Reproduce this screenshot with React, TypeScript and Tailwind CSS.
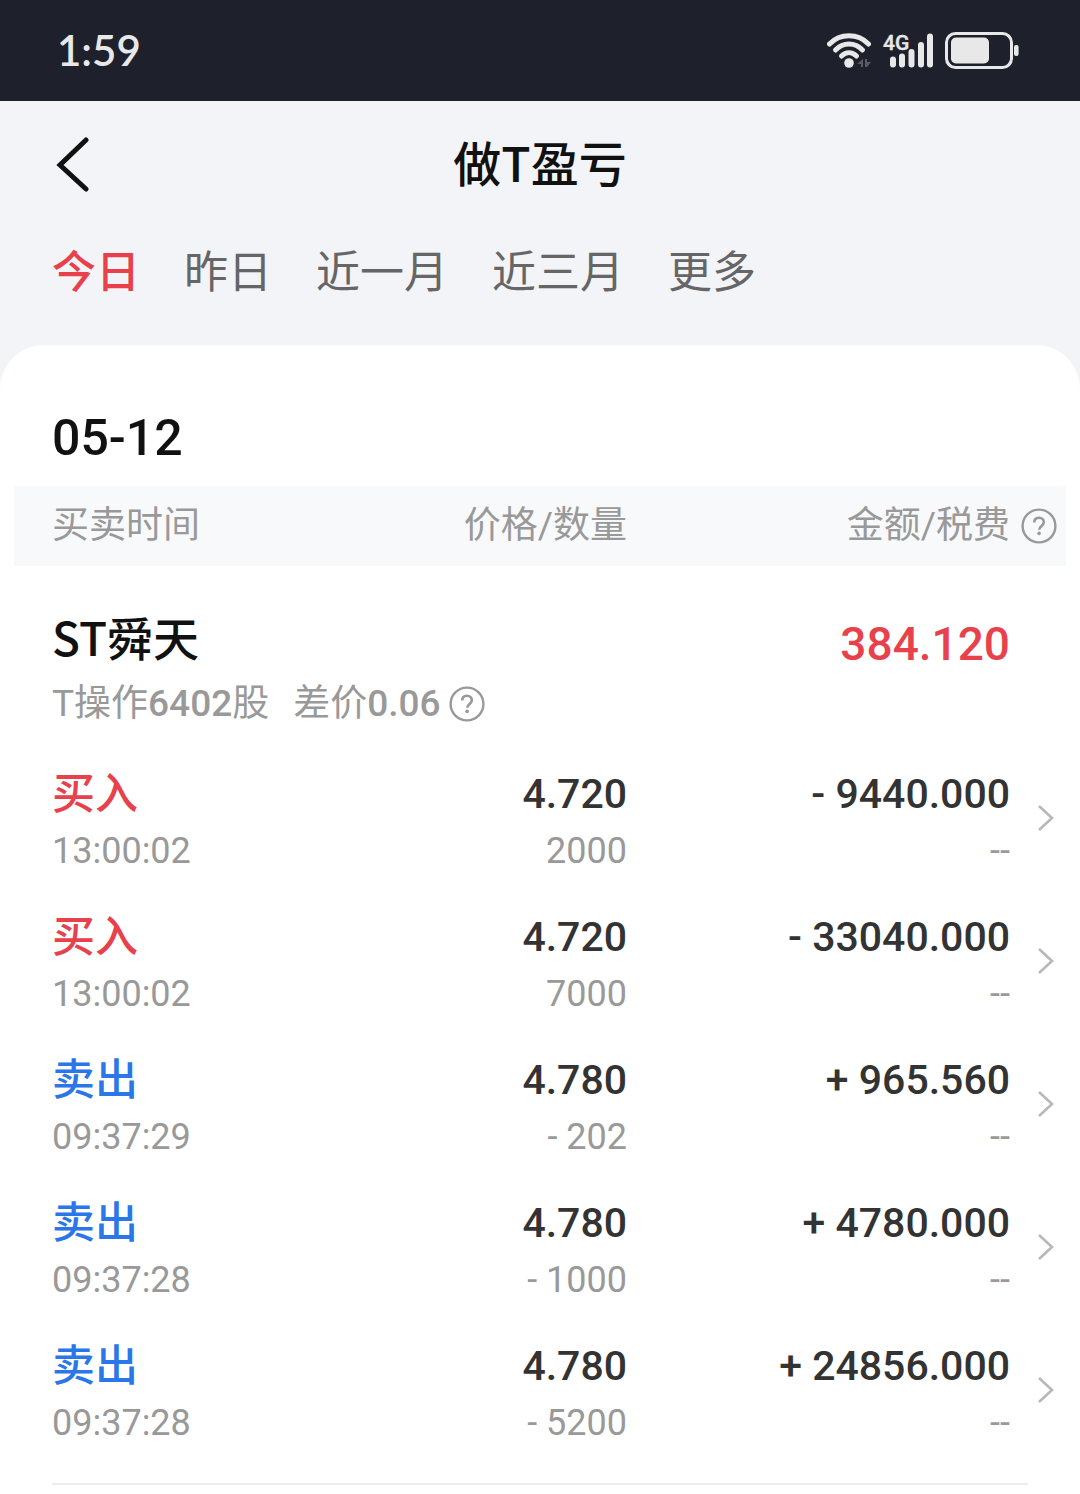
import clsx from 'clsx';
import { useState } from 'react';

const tabs = ['今日', '昨日', '近一月', '近三月', '更多'];

const trades = [
  { side: 'buy', time: '13:00:02', price: '4.720', count: '2000', amount: '- 9440.000', fee: '--' },
  { side: 'buy', time: '13:00:02', price: '4.720', count: '7000', amount: '- 33040.000', fee: '--' },
  { side: 'sell', time: '09:37:29', price: '4.780', count: '- 202', amount: '+ 965.560', fee: '--' },
  { side: 'sell', time: '09:37:28', price: '4.780', count: '- 1000', amount: '+ 4780.000', fee: '--' },
  { side: 'sell', time: '09:37:28', price: '4.780', count: '- 5200', amount: '+ 24856.000', fee: '--' },
];

function HelpIcon() {
  return (
    <svg width="36" height="36" viewBox="0 0 36 36" fill="none" stroke="#999999">
      <circle cx="18" cy="18" r="16.4" strokeWidth="2.4" />
      <path
        d="M13.2 14.6c0-3 2-4.8 4.8-4.8s4.8 1.8 4.8 4.4c0 3.6-4.6 3.8-4.6 7.6"
        strokeWidth="2.6"
      />
      <circle cx="18.1" cy="25.4" r="1.8" fill="#999999" stroke="none" />
    </svg>
  );
}

function StatusBar() {
  return (
    <div className="flex h-[101px] items-center justify-between bg-[#1e212b] pr-[61px] pl-[57px] text-[#e8e8e9]">
      <span className="font-['Lato'] text-[42px] font-semibold">1:59</span>
      <svg width="192" height="42" viewBox="0 0 192 42" fill="none">
        {/* Wifi */}
        <g stroke="#e8e8e9" strokeWidth="5" strokeLinecap="round">
          <path d="M2.5 14C13 3 31 3 41.500 14" />
          <path d="M8.500 20C16 12 28 12 35.500 20" />
          <path d="M14.500 26C19 21.500 25 21.500 29.500 26" />
        </g>
        <circle cx="22" cy="33" r="4.8" fill="#e8e8e9" />
        <path d="M36 29v8h-2v-3h-4zM38 29h2v3h4l-4 5h-2z" fill="#5a5c63" />
        {/* Signal */}
        <text
          x="56"
          y="20"
          fontSize="21"
          fontWeight="500"
          fill="#e8e8e9"
          stroke="#e8e8e9"
          strokeWidth="0.4"
          className="font-['Roboto']"
        >
          4G
        </text>
        <path
          d="M66 29.5v5M75 26.5v8M84.5 22v12.5M94 15v19.5M103 6.5v28"
          stroke="#e8e8e9"
          strokeWidth="6"
          strokeLinecap="round"
        />
        {/* Battery */}
        <rect x="119.5" y="3.5" width="65" height="34" rx="9" stroke="#e8e8e9" strokeWidth="3" />
        <rect x="124" y="7.5" width="38" height="26" rx="5" fill="#e8e8e9" />
        <rect x="187" y="15" width="4.6" height="11" rx="2" fill="#e8e8e9" />
      </svg>
    </div>
  );
}

export default function App() {
  const [active, setActive] = useState('今日');

  return (
    <main className="flex min-h-screen flex-col bg-[#f3f4f8] font-['Roboto','Noto_Sans_CJK_SC',sans-serif] text-[#111111]">
      <StatusBar />

      <header className="grid h-[126px] grid-cols-[1fr_auto_1fr] items-center px-[52px]">
        <button aria-label="返回" className="w-fit cursor-pointer">
          <svg width="40" height="56" viewBox="0 0 40 56" fill="none" stroke="#111111">
            <path d="M34 4L8 29l26 24" strokeWidth="5" strokeLinecap="round" />
          </svg>
        </button>
        <h1 className="pb-[6px] font-['Noto_Sans_CJK_SC'] text-[48px] font-medium">做T盈亏</h1>
      </header>

      <nav className="flex h-[118px] items-start gap-[44px] px-[52px] pt-[16px] text-[44px] leading-[60px]">
        {tabs.map((tab) => (
          <button
            key={tab}
            onClick={() => setActive(tab)}
            className={clsx(
              'cursor-pointer',
              tab === active ? 'font-medium text-[#e8414b]' : 'text-[#666666]'
            )}
          >
            {tab}
          </button>
        ))}
      </nav>

      <section className="flex-1 rounded-t-[44px] bg-white px-[14px] pt-[62px]">
        <h2 className="px-[38px] text-[50px] leading-[62px] font-medium">05-12</h2>

        <table className="mt-[17px] w-full table-fixed">
          <colgroup>
            <col />
            <col className="w-[28%]" />
            <col className="w-[383px]" />
            <col className="w-[56px]" />
          </colgroup>
          <thead className="bg-[#f8f9fb] text-[37px] text-[#999999]">
            <tr className="h-[80px]">
              <th className="pl-[38px] text-left font-normal">买卖时间</th>
              <th className="text-right font-normal">价格/数量</th>
              <th className="text-right font-normal">金额/税费</th>
              <th className="pl-[11px]">
                <button aria-label="税费说明" className="block cursor-pointer">
                  <HelpIcon />
                </button>
              </th>
            </tr>
          </thead>
          <tbody>
            <tr className="h-[182px] align-top">
              <td colSpan={2} className="pt-[38px] pl-[38px]">
                <h3 className="font-['Noto_Sans_CJK_SC'] text-[46px] leading-[64px] font-medium">
                  ST舜天
                </h3>
                <div className="mt-[4px] flex items-center gap-[8px] text-[37px] leading-[64px] text-[#999999]">
                  <span>
                    T操作<span className="font-medium">6402</span>股
                  </span>
                  <span className="ml-[16px]">
                    差价<span className="font-medium">0.06</span>
                  </span>
                  <button aria-label="差价说明" className="cursor-pointer">
                    <HelpIcon />
                  </button>
                </div>
              </td>
              <td className="pt-[46px] text-right text-[46px] leading-[64px] font-medium text-[#e8414b]">
                384.120
              </td>
              <td />
            </tr>

            {trades.map((trade, index) => (
              <tr key={index} className="h-[143px] align-top">
                <td className="pt-[16px] pl-[38px]">
                  <p
                    className={clsx(
                      'text-[43px] leading-[60px] font-medium',
                      trade.side === 'buy' ? 'text-[#e8414b]' : 'text-[#2b76e8]'
                    )}
                  >
                    {trade.side === 'buy' ? '买入' : '卖出'}
                  </p>
                  <p className="text-[36px] leading-[54px] text-[#999999]">{trade.time}</p>
                </td>
                <td className="pt-[16px] text-right">
                  <p className="text-[41px] leading-[60px] font-medium text-[#333333]">
                    {trade.price}
                  </p>
                  <p className="text-[36px] leading-[54px] text-[#999999]">{trade.count}</p>
                </td>
                <td className="pt-[16px] text-right">
                  <p className="text-[41px] leading-[60px] font-medium text-[#333333]">
                    {trade.amount}
                  </p>
                  <p className="text-[36px] leading-[54px] text-[#999999]">{trade.fee}</p>
                </td>
                <td className="pb-[4px] pl-[26px] align-middle">
                  <button aria-label="查看详情" className="block cursor-pointer">
                    <svg width="20" height="28" viewBox="0 0 20 28" fill="none" stroke="#b8b8b8">
                      <path d="M3 2l13 12L3 26" strokeWidth="2.6" />
                    </svg>
                  </button>
                </td>
              </tr>
            ))}
          </tbody>
        </table>

        <hr className="mx-[38px] mt-[20px] border-t-2 border-[#ececec]" />
      </section>
    </main>
  );
}
